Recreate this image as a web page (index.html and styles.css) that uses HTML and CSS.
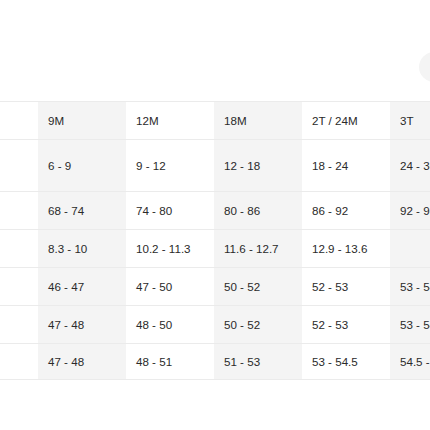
FILE: index.html
```html
<!DOCTYPE html>
<html>
<head>
<meta charset="utf-8">
<link rel="stylesheet" href="styles.css">
</head>
<body>
<div class="page">
  <button class="close" aria-label="Close"></button>
  <div class="scroller">
    <table class="sizes">
      <colgroup>
        <col class="c-label"><col class="c"><col class="c"><col class="c"><col class="c"><col class="c">
      </colgroup>
      <tr class="row">
        <td></td><td class="shade">9M</td><td>12M</td><td class="shade">18M</td><td>2T / 24M</td><td class="shade">3T</td>
      </tr>
      <tr class="row tall">
        <td></td><td class="shade">6 - 9</td><td>9 - 12</td><td class="shade">12 - 18</td><td>18 - 24</td><td class="shade">24 - 36</td>
      </tr>
      <tr class="row">
        <td></td><td class="shade">68 - 74</td><td>74 - 80</td><td class="shade">80 - 86</td><td>86 - 92</td><td class="shade">92 - 98</td>
      </tr>
      <tr class="row">
        <td></td><td class="shade">8.3 - 10</td><td>10.2 - 11.3</td><td class="shade">11.6 - 12.7</td><td>12.9 - 13.6</td><td class="shade"></td>
      </tr>
      <tr class="row">
        <td></td><td class="shade">46 - 47</td><td>47 - 50</td><td class="shade">50 - 52</td><td>52 - 53</td><td class="shade">53 - 54</td>
      </tr>
      <tr class="row">
        <td></td><td class="shade">47 - 48</td><td>48 - 50</td><td class="shade">50 - 52</td><td>52 - 53</td><td class="shade">53 - 54</td>
      </tr>
      <tr class="row last">
        <td></td><td class="shade">47 - 48</td><td>48 - 51</td><td class="shade">51 - 53</td><td>53 - 54.5</td><td class="shade">54.5 - 56</td>
      </tr>
    </table>
  </div>
</div>
</body>
</html>
```
FILE: styles.css
```css
html, body {
  margin: 0;
  padding: 0;
  background: #fff;
}
.page {
  position: relative;
  width: 430px;
  height: 430px;
  overflow: hidden;
  padding-top: 101px;
  box-sizing: border-box;
  font-family: "Liberation Sans", Arial, sans-serif;
  font-size: 11.6px;
  color: #2a2a2a;
}
.close {
  position: absolute;
  left: 419px;
  top: 52px;
  width: 30px;
  height: 30px;
  border: 0;
  padding: 0;
  border-radius: 50%;
  background: #f4f4f4;
}
.scroller {
  width: 430px;
  overflow: hidden;
}
.sizes {
  border-collapse: collapse;
  table-layout: fixed;
  width: 478px;
}
.c-label { width: 38px; }
.c { width: 88px; }
.row td {
  border-top: 1px solid #ebebeb;
  height: 38px;
  padding: 0 0 0 10px;
  box-sizing: border-box;
  white-space: nowrap;
  overflow: hidden;
  vertical-align: middle;
}
.row.tall td {
  height: 52px;
}
.row.last td {
  height: 36px;
  border-bottom: 1px solid #ebebeb;
}
.shade {
  background: #f4f4f4;
}
```
